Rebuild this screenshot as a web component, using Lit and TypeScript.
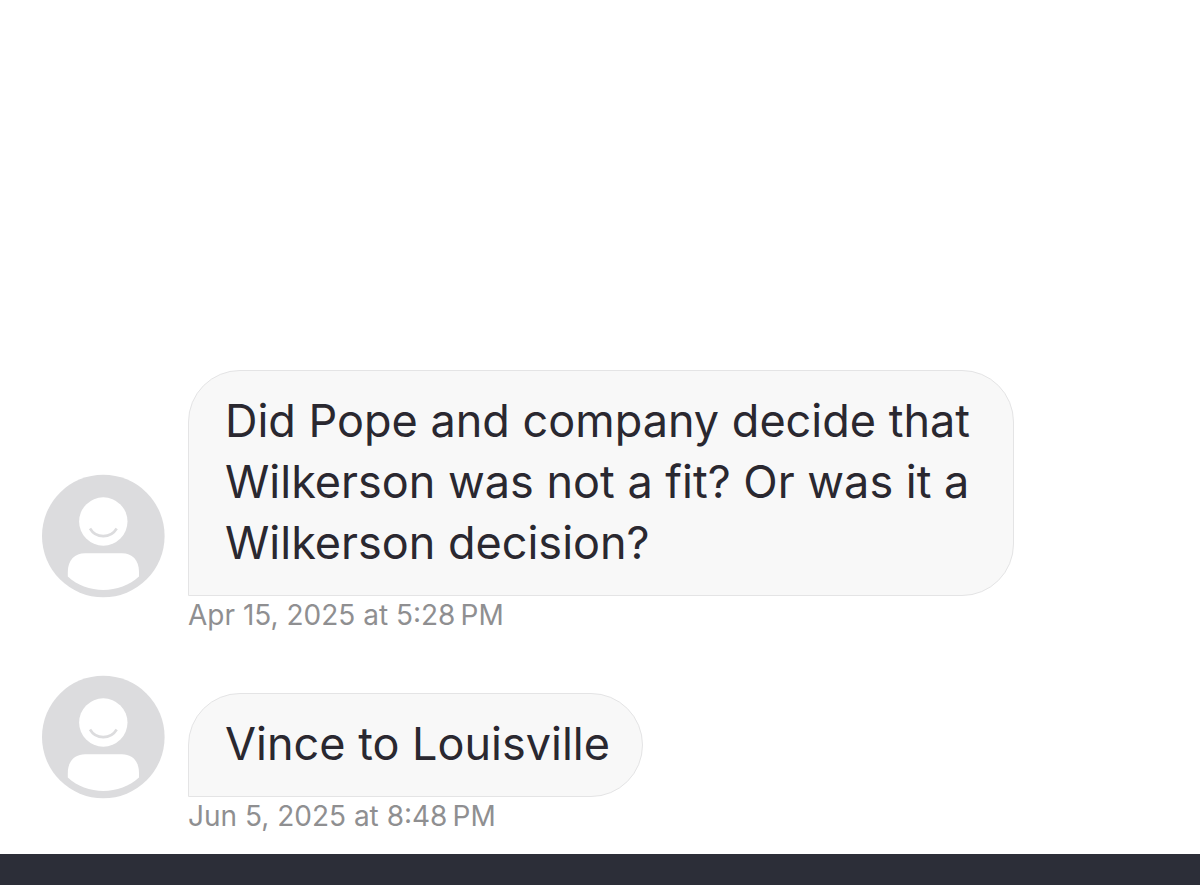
import { LitElement, html, css } from "lit";
import { customElement, property } from "lit/decorators.js";

@customElement("user-avatar")
class UserAvatar extends LitElement {
  static styles = css`
    :host { display: block; flex: none; width: 124px; height: 124px; }
    svg { display: block; width: 100%; height: 100%; }
  `;
  render() {
    return html`<svg viewBox="0 0 124 124" role="img" aria-label="User">
      <circle cx="62.300" cy="62" r="61.300" fill="#dcdcde" />
      <circle cx="62.300" cy="47.500" r="24.200" fill="#fff" />
      <path d="M49 54.500 C55 64.700 69.500 64.700 75.700 54.500" fill="none" stroke="#dcdcde" stroke-width="2.600" />
      <path d="M26.800 102.500 V98 C26.800 86 34 79.300 44 79.300 H81 C91 79.300 98 86 98 98 V102.500 C89 111 75 116 62.400 116 C49.500 116 35.500 111 26.800 102.500 Z" fill="#fff" />
    </svg>`;
  }
}

@customElement("chat-message")
class ChatMessage extends LitElement {
  @property() text = "";
  @property() date = "";
  static styles = css`
    :host { display: flex; align-items: flex-end; gap: 23px; }
    user-avatar { margin-bottom: 32px; }
    .content { min-width: 0; }
    .bubble {
      box-sizing: border-box;
      width: fit-content;
      max-width: 826px;
      margin: 0;
      padding: 19px 32px 22px 36px;
      border: 1px solid #e4e4e5;
      border-radius: 52px 52px 52px 0;
      background: #f8f8f8;
      color: #2a2830;
      font-size: 45px;
      line-height: 61px;
    }
    .date {
      display: block;
      padding-top: 4px;
      color: #8f8f91;
      font-size: 28px;
      line-height: 30px;
    }
  `;
  render() {
    return html`
      <user-avatar></user-avatar>
      <div class="content">
        <p class="bubble">${this.text}</p>
        <time class="date">${this.date}</time>
      </div>`;
  }
}

@customElement("app-root")
class AppRoot extends LitElement {
  static styles = css`
    :host {
      display: flex;
      flex-direction: column;
      min-height: 100vh;
      background: #fff;
      font-family: Inter, "Liberation Sans", sans-serif;
    }
    main {
      flex: 1;
      display: flex;
      flex-direction: column;
      justify-content: flex-end;
      gap: 45px;
      padding: 0 41px 23px;
    }
    footer { height: 31px; background: #2c2e38; }
  `;
  messages = [
    { text: "Did Pope and company decide that Wilkerson was not a fit? Or was it a Wilkerson decision?", date: "Apr 15, 2025 at 5:28\u202fPM" },
    { text: "Vince to Louisville", date: "Jun 5, 2025 at 8:48\u202fPM" },
  ];
  render() {
    return html`
      <main>
        ${this.messages.map((m) => html`<chat-message .text=${m.text} .date=${m.date}></chat-message>`)}
      </main>
      <footer></footer>`;
  }
}
